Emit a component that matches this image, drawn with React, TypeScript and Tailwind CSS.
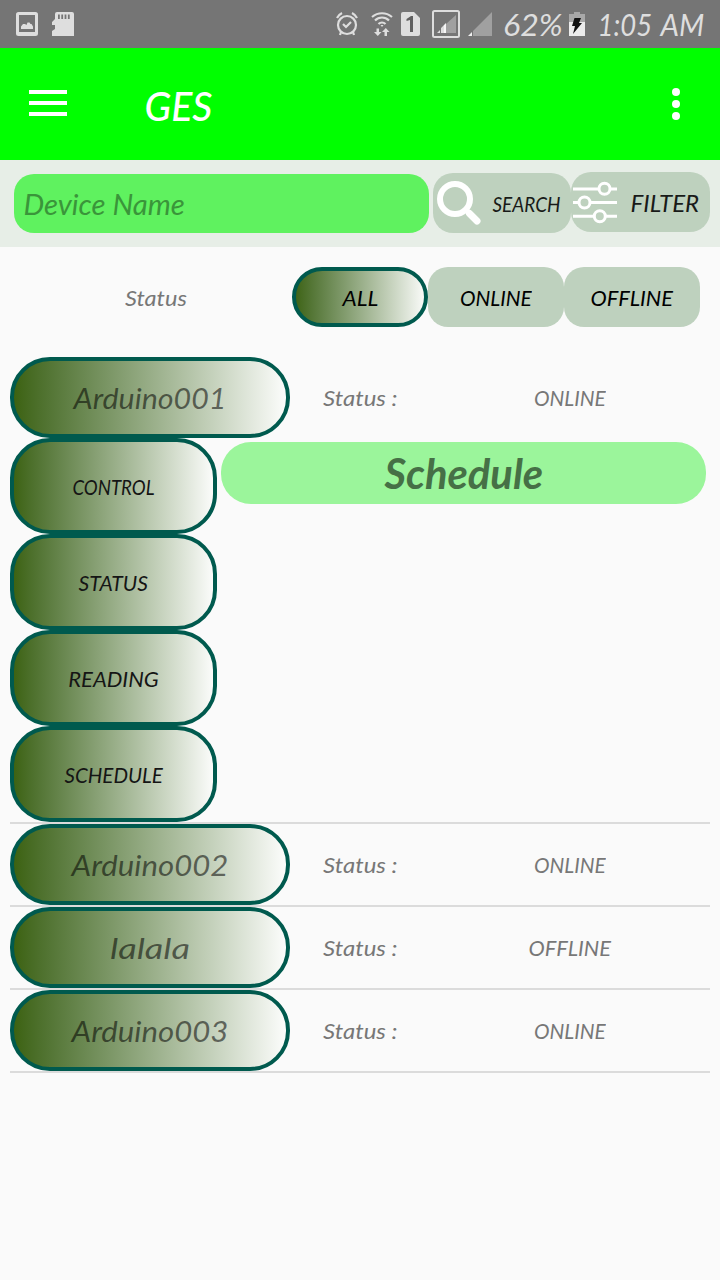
import { useLayoutEffect, useRef, useState } from "react";

type LabelProps = { text: string; width: number; className?: string };

/* Handwriting-like label, condensed or widened to its measured width. */
function Label({ text, width, className = "" }: LabelProps) {
  const ref = useRef<HTMLSpanElement>(null);
  const [scale, setScale] = useState(1);
  useLayoutEffect(() => {
    if (ref.current && ref.current.offsetWidth) setScale(width / ref.current.offsetWidth);
  }, [width, text]);
  return (
    <span className="inline-flex shrink-0 justify-center" style={{ width }}>
      <span
        ref={ref}
        className={`inline-block shrink-0 whitespace-nowrap leading-none ${className}`}
        style={{ transform: `scaleX(${scale})` }}
      >
        {text}
      </span>
    </span>
  );
}

const gradient = "border-4 border-[#005a4e] bg-linear-to-r from-[#3a600a] to-white bg-origin-border";

function StatusBar() {
  return (
    <div className="flex h-12 items-center bg-[#757575] text-[#dedede]">
      <svg className="ml-4 h-6 w-[22px]" viewBox="0 0 22 24" fill="currentColor">
        <path fillRule="evenodd" d="M2.500 0h17a2.500 2.500 0 0 1 2.500 2.500v19a2.500 2.500 0 0 1-2.500 2.500h-17A2.500 2.500 0 0 1 0 21.500v-19A2.500 2.500 0 0 1 2.500 0zM3 3v17h16V3z" />
        <path d="M5 17v-2.500l2-2.500h2l1.500 1 1-2.500h2l1 1.500h1l1.500 2.500V17z" />
      </svg>
      <svg className="ml-[14px] h-6 w-[22px]" viewBox="0 0 22 24" fill="currentColor">
        <path fillRule="evenodd" d="M5 0h15a2 2 0 0 1 2 2v22H0v-5l3-2v-4H0v-3l3-3V2a2 2 0 0 1 2-2zM6 2.500v4.500h1.800V2.500zm3.300 0v4.500h1.800V2.500zm3.300 0v4.500h1.800V2.500zm3.300 0v4.500h1.800V2.500z" />
      </svg>
      <svg className="ml-[262px] h-6 w-[22px]" viewBox="0 0 22 24" fill="none" stroke="currentColor" strokeWidth="2.200">
        <circle cx="11" cy="13" r="9" />
        <path d="M7 12l3 3 5-5M1 6c1-2 3-4 5-5M21 6c-1-2-3-4-5-5M5 20l-1 3M17 20l1 3" />
      </svg>
      <svg className="ml-[13px] h-6 w-[22px]" viewBox="0 0 22 24" fill="none" stroke="currentColor" strokeWidth="2.200">
        <path d="M1 5c6-5 14-5 20 0M4 8.500c4-4 10-4 14 0M7.500 12c2-2 5-2 7 0" />
        <path d="M9.500 13h3L11 15z" fill="currentColor" stroke="none" />
        <path d="M5.500 16.500H8V20h2.500L6.800 24 3 20h2.500zM13.500 24v-4H11l3.800-4 3.700 4H16v4z" fill="currentColor" stroke="none" />
      </svg>
      <svg className="ml-2 h-6 w-[19px]" viewBox="0 0 19 24">
        <path d="M2 0h11l6 6v16a2 2 0 0 1-2 2H2a2 2 0 0 1-2-2V2a2 2 0 0 1 2-2z" fill="#dedede" />
        <path d="M5.500 7L10 4h2v16H9V8L5.500 9z" fill="#606060" />
      </svg>
      <svg className="ml-3 h-7 w-7" viewBox="0 0 28 28">
        <rect x="1" y="1" width="26" height="26" rx="1.500" fill="none" stroke="#dedede" strokeWidth="2" />
        <path d="M14 14l10-9v18H14z" fill="#a0a0a0" />
        <path d="M5 23l3-3v3zM9 23v-5l3-3v8z" fill="#dedede" />
        <path d="M12 23v-8l2-2v10z" fill="#f5f5f5" />
      </svg>
      <svg className="ml-2 h-6 w-6" viewBox="0 0 24 24">
        <path d="M5 24V19L24 0v24z" fill="#a0a0a0" />
        <path d="M0 24l4-4v4z" fill="#f0f0f0" />
      </svg>
      <span className="ml-[11px] flex pb-px"><Label text="62%" width={60} className="text-[30px]" /></span>
      <svg className="ml-[6px] h-6 w-4" viewBox="0 0 16 24">
        <path d="M5 0h6v2h5v8H0V2h5z" fill="#a8a8a8" />
        <path d="M0 10h16v14H0z" fill="#ececec" />
        <path d="M5.500 6H12l-2 5h3L4 22l2-8H3z" fill="#111" />
      </svg>
      <span className="ml-3 flex gap-[8px] pb-px">
        <Label text="1:05" width={55} className="text-[30px]" />
        <Label text="AM" width={44} className="text-[30px]" />
      </span>
    </div>
  );
}

function Header() {
  return (
    <header className="flex h-28 items-center bg-[#00ff00] text-white">
      <div className="mb-[2px] ml-[29px] flex w-[38px] flex-col gap-[7px]">
        <div className="h-1 bg-white" />
        <div className="h-1 bg-white" />
        <div className="h-1 bg-white" />
      </div>
      <div className="ml-[77px] flex pt-[3px]">
        <Label text="GES" width={68} className="text-[41px] font-medium" />
      </div>
      <div className="mr-10 ml-auto flex flex-col gap-1">
        <div className="size-2 rounded-full bg-white" />
        <div className="size-2 rounded-full bg-white" />
        <div className="size-2 rounded-full bg-white" />
      </div>
    </header>
  );
}

function SearchBar() {
  return (
    <div className="flex h-[87px] items-start bg-[#e7eee7] pt-3">
      <div className="mt-[2px] ml-[14px] flex h-[59px] w-[415px] items-center rounded-[20px] bg-[#5ff25f] pt-px pl-[10px] text-[#3a953a]">
        <Label text="Device Name" width={161} className="text-[28px]" />
      </div>
      <button className="mt-px ml-1 flex h-[60px] w-[138px] items-center rounded-[20px] bg-[#bed1be] text-[#181a18]">
        <svg className="ml-1 h-11 w-11 shrink-0" viewBox="0 0 44 44" fill="none" stroke="white">
          <circle cx="18" cy="18" r="15" strokeWidth="6" />
          <path d="M28 28l4 4" strokeWidth="5" />
          <path d="M32.500 32.500l7.500 7.500" strokeWidth="7" strokeLinecap="round" />
        </svg>
        <span className="ml-[11px] flex pt-px"><Label text="SEARCH" width={68} className="text-[22px]" /></span>
      </button>
      <button className="flex h-[60px] w-[139px] items-center rounded-[20px] bg-[#bed1be] text-[#181a18]">
        <svg className="ml-[2px] h-11 w-11 shrink-0" viewBox="0 0 44 44" fill="none" stroke="white" strokeWidth="3">
          <path d="M0 9h26M37 9h7M0 22.500h6M17 22.500h27M0 36.200h21M32 36.200h12" />
          <circle cx="31.500" cy="8.800" r="5.500" />
          <circle cx="11.500" cy="22.500" r="5.500" />
          <circle cx="26.800" cy="36.200" r="5.500" />
        </svg>
        <span className="ml-[13px] flex pt-[2px]"><Label text="FILTER" width={69} className="text-[23px]" /></span>
      </button>
    </div>
  );
}

function StatusFilter() {
  return (
    <div className="flex items-center pt-5 pl-5 text-black">
      <div className="flex w-[272px] justify-center pt-[2px] text-[#777]">
        <Label text="Status" width={62} className="text-[22px]" />
      </div>
      <button className={`flex h-[60px] w-[136px] items-center justify-center rounded-[30px] pt-[2px] ${gradient}`}>
        <Label text="ALL" width={36} className="text-[22px]" />
      </button>
      <button className="flex h-[60px] w-[136px] items-center justify-center rounded-[20px] bg-[#bed1be] pt-[2px]">
        <Label text="ONLINE" width={72} className="text-[22px]" />
      </button>
      <button className="flex h-[60px] w-[136px] items-center justify-center rounded-[20px] bg-[#bed1be] pt-[2px]">
        <Label text="OFFLINE" width={83} className="text-[22px]" />
      </button>
    </div>
  );
}

type Device = { name: string; width: number; status: string; statusWidth: number };

function DeviceRow({ name, width, status, statusWidth }: Device) {
  return (
    <div className="flex h-[81px] items-center text-[#777]">
      <div className={`flex h-[81px] w-[280px] items-center justify-center rounded-[40px] text-black/55 ${gradient}`}>
        <Label text={name} width={width} className="text-[29px]" />
      </div>
      <div className="flex w-[140px] justify-center">
        <Label text="Status :" width={74} className="text-[22px]" />
      </div>
      <div className="flex w-[280px] justify-center">
        <Label text={status} width={statusWidth} className="text-[22px]" />
      </div>
    </div>
  );
}

const actions = [
  { text: "CONTROL", width: 82 },
  { text: "STATUS", width: 69 },
  { text: "READING", width: 91 },
  { text: "SCHEDULE", width: 98 },
];

const devices: Device[] = [
  { name: "Arduino002", width: 157, status: "ONLINE", statusWidth: 72 },
  { name: "lalala", width: 80, status: "OFFLINE", statusWidth: 83 },
  { name: "Arduino003", width: 157, status: "ONLINE", statusWidth: 72 },
];

export default function App() {
  return (
    <div className="h-[1280px] w-[720px] overflow-hidden bg-[#fafafa] font-['Lato',sans-serif] italic">
      <StatusBar />
      <Header />
      <SearchBar />
      <StatusFilter />
      <main className="px-[10px] pt-[30px]">
        <DeviceRow name="Arduino001" width={153} status="ONLINE" statusWidth={72} />
        <div className="flex">
          <div className="flex w-[207px] flex-col">
            {actions.map((a) => (
              <button key={a.text} className={`flex h-24 items-center justify-center rounded-[40px] pt-px text-[#151515] ${gradient}`}>
                <Label text={a.text} width={a.width} className="text-[22px]" />
              </button>
            ))}
          </div>
          <div className="mt-1 ml-1 flex h-[62px] w-[485px] items-center justify-center rounded-[30px] bg-[#9bf59b] text-[#467046]">
            <Label text="Schedule" width={159} className="text-[42px] font-bold" />
          </div>
        </div>
        <div className="h-[2px] bg-[#dbdbdb]" />
        {devices.map((d) => (
          <div key={d.name} className="border-b-2 border-[#dbdbdb]">
            <DeviceRow {...d} />
          </div>
        ))}
      </main>
    </div>
  );
}
